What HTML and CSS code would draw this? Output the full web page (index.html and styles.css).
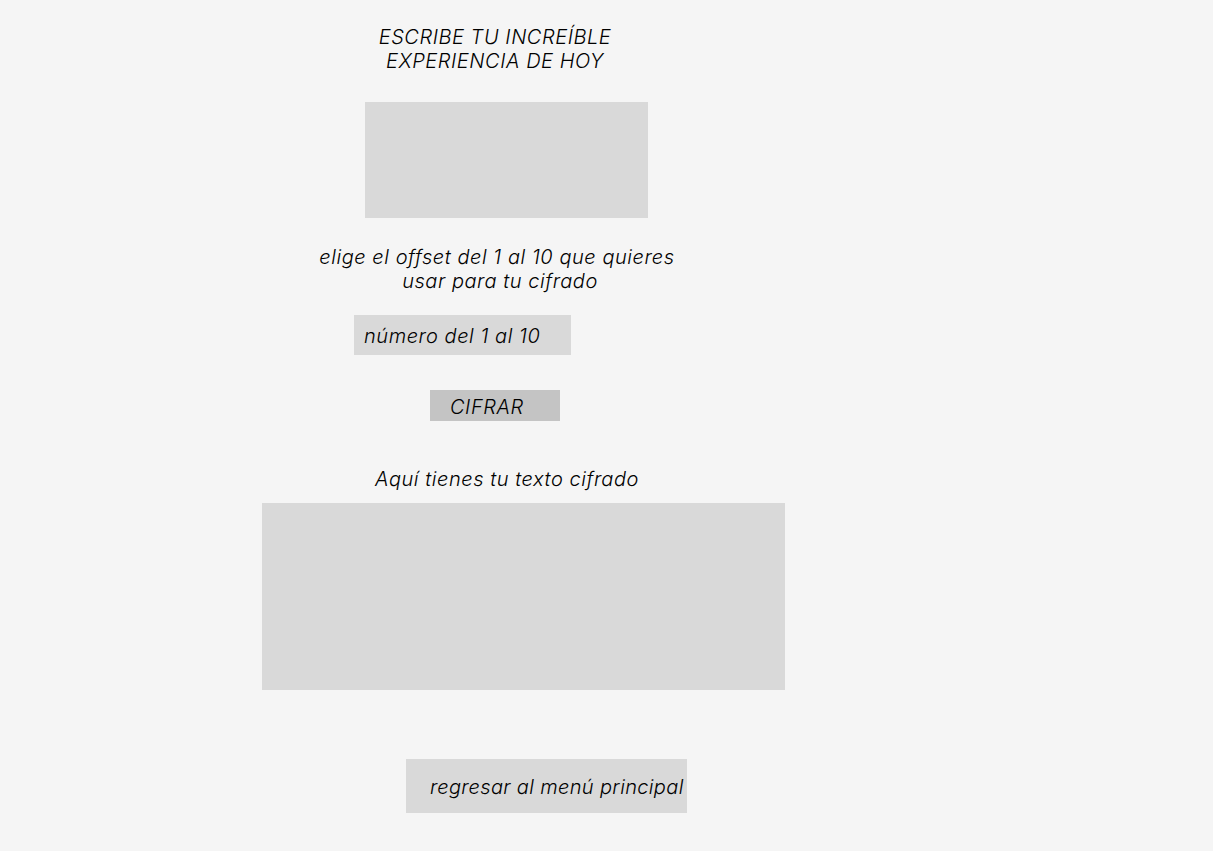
FILE: index.html
```html
<!DOCTYPE html>
<html lang="es">
<head>
<meta charset="utf-8">
<title>Cifrado</title>
<link rel="stylesheet" href="styles.css">
</head>
<body>
<main class="page">
  <h1 class="title">ESCRIBE TU INCREÍBLE<br>EXPERIENCIA DE HOY</h1>
  <div class="box box-input"></div>
  <p class="label label-offset">elige el offset del 1 al 10 que quieres<br><span class="line2">usar para tu cifrado</span></p>
  <div class="field"><span>número del 1 al 10</span></div>
  <div class="btn-cifrar"><span>CIFRAR</span></div>
  <p class="label label-result">Aquí tienes tu texto cifrado</p>
  <div class="box box-output"></div>
  <div class="btn-back"><span>regresar al menú principal</span></div>
</main>
</body>
</html>
```

FILE: styles.css
```css
* { box-sizing: border-box; }
html, body {
  margin: 0;
  padding: 0;
  background: #f5f5f5;
}
body {
  font-family: Inter, "Noto Sans", sans-serif;
  font-style: italic;
  font-weight: 300;
  font-size: 20px;
  line-height: 24px;
  letter-spacing: 0.55px;
  color: #000;
  width: 1213px;
  height: 851px;
  overflow: hidden;
}
.page {
  display: flex;
  flex-direction: column;
  align-items: flex-start;
  padding-top: 25px;
}
.title {
  margin: 0 0 0 335px;
  width: 320px;
  font-size: 20px;
  font-weight: 300;
  line-height: 24px;
  text-align: center;
}
.box {
  background: #d9d9d9;
}
.box-input {
  margin: 29px 0 0 365px;
  width: 283px;
  height: 116px;
}
.label {
  margin: 0;
  text-align: center;
}
.label-offset {
  margin: 27px 0 0 297px;
  width: 400px;
}
.line2 {
  padding-left: 6px;
}
.field {
  margin: 22px 0 0 354px;
  width: 217px;
  height: 40px;
  background: #d9d9d9;
  display: flex;
  align-items: center;
  padding-left: 10px;
  padding-top: 2px;
  white-space: nowrap;
}
.btn-cifrar {
  margin: 35px 0 0 430px;
  width: 130px;
  height: 31px;
  background: #c4c4c4;
  display: flex;
  align-items: center;
  padding-left: 20px;
  padding-top: 2px;
}
.label-result {
  margin: 46px 0 0 307px;
  width: 400px;
}
.box-output {
  margin: 12px 0 0 262px;
  width: 523px;
  height: 187px;
}
.btn-back {
  margin: 69px 0 0 406px;
  width: 281px;
  height: 54px;
  background: #d9d9d9;
  display: flex;
  align-items: center;
  padding-left: 24px;
  padding-top: 2px;
  white-space: nowrap;
  letter-spacing: 0.35px;
}
```
